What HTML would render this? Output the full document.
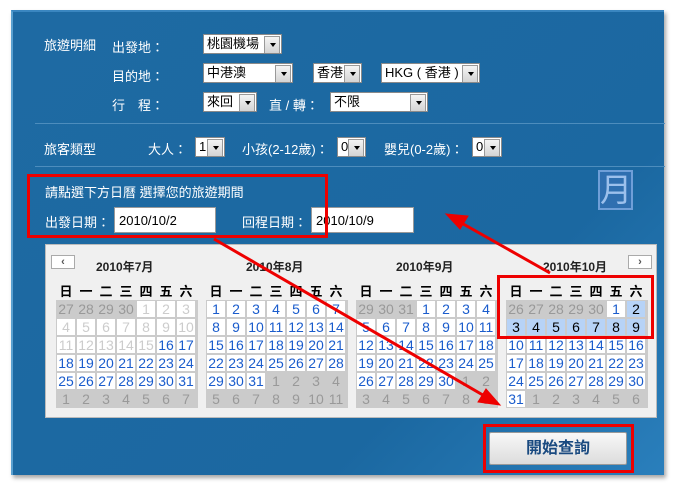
<!DOCTYPE html>
<html><head><meta charset="utf-8"><style>
*{margin:0;padding:0;box-sizing:border-box}
body{width:674px;height:484px;background:#fff;position:relative;overflow:hidden;font-family:"Liberation Sans","Noto Sans CJK TC",sans-serif;font-size:13px;color:#fff}
.a{position:absolute}
#panel{left:11px;top:10px;width:653px;height:465px;background:linear-gradient(135deg,#1e6aa3 0%,#1b68a1 70%,#2a7fbc 100%);border-top:2px solid #3a86c0;border-left:2px solid #5aa0d0;box-shadow:2px 3px 4px rgba(0,0,0,.35)}
.sel{position:absolute;height:20px;background:#fff;border:1px solid #8a8a8a;color:#000;font-size:13px;line-height:18px;padding-left:3px;white-space:nowrap;overflow:hidden}
.sel:after{content:"";position:absolute;right:1px;top:1px;width:14px;height:16px;background:linear-gradient(#f4f4f4,#d4d4d4);border:1px solid #999}
.sel:before{content:"";position:absolute;right:5px;top:8px;border:3px solid transparent;border-top:4px solid #000;z-index:2}
.hr{position:absolute;left:35px;width:630px;height:1px;background:#4d8dbd}
.inp{position:absolute;height:26px;background:#fff;border:1px solid #999;color:#000;font-size:13px;line-height:26px;padding-left:4px}
.red{position:absolute;border:3px solid #e00;}
#cal{left:45px;top:244px;width:612px;height:174px;background:#f0f0f0;border:1px solid #bbb}
.mt{position:absolute;top:13px;font-weight:bold;font-size:12px;color:#222}
.wd{position:absolute;top:36px;display:grid;grid-template-columns:repeat(7,20px);font-weight:bold;font-size:13px;color:#000;text-align:center}
.g{position:absolute;top:55px;display:grid;grid-template-columns:repeat(7,18px);grid-auto-rows:16px;gap:2px;background:#cbcbcb;padding:1px;width:142px}
.g span{font-size:14px;text-align:center;line-height:16px;color:#1a5ccc;background:#fff}
.g .d{color:#ccc}
.g .x{background:#cbcbcb;color:#999}
.g .s{background:#b7d3f7;color:#000}
.nb{position:absolute;top:10px;width:24px;height:14px;background:#fff;border:1px solid #aaa;color:#555;font-size:11px;line-height:12px;text-align:center;font-weight:bold}
</style></head><body>
<div id="panel" class="a"></div>
<div class="a" style="left:44px;top:35px">旅遊明細</div>
<div class="a" style="left:112px;top:37px">出發地：</div>
<div class="sel" style="left:203px;top:34px;width:79px">桃園機場</div>
<div class="a" style="left:112px;top:66px">目的地：</div>
<div class="sel" style="left:203px;top:63px;width:90px">中港澳</div>
<div class="sel" style="left:313px;top:63px;width:49px">香港</div>
<div class="sel" style="left:381px;top:63px;width:99px">HKG ( 香港 )</div>
<div class="a" style="left:112px;top:95px">行　程：</div>
<div class="sel" style="left:203px;top:92px;width:54px">來回</div>
<div class="a" style="left:269px;top:95px">直 / 轉：</div>
<div class="sel" style="left:330px;top:92px;width:98px">不限</div>
<div class="hr" style="top:123px"></div>
<div class="a" style="left:44px;top:139px">旅客類型</div>
<div class="a" style="left:148px;top:139px">大人：</div>
<div class="sel" style="left:195px;top:137px;width:30px">1</div>
<div class="a" style="left:242px;top:139px">小孩(2-12歲)：</div>
<div class="sel" style="left:337px;top:137px;width:29px">0</div>
<div class="a" style="left:384px;top:139px">嬰兒(0-2歲)：</div>
<div class="sel" style="left:472px;top:137px;width:30px">0</div>
<div class="hr" style="top:166px"></div>
<div class="a" style="left:45px;top:182px">請點選下方日曆 選擇您的旅遊期間</div>
<div class="a" style="left:45px;top:212px">出發日期：</div>
<div class="inp" style="left:114px;top:207px;width:102px">2010/10/2</div>
<div class="a" style="left:242px;top:212px">回程日期：</div>
<div class="inp" style="left:311px;top:207px;width:103px">2010/10/9</div>
<div class="a" style="left:598px;top:170px;width:35px;height:40px;border:2px solid #6f9fd8;background:#2f6fb0;color:#9cc0ec;font-size:32px;line-height:36px;text-align:center">月</div>
<div class="red" style="left:27px;top:174px;width:301px;height:64px"></div>

<div id="cal" class="a">
<div class="nb" style="left:5px">&lsaquo;</div>
<div class="nb" style="left:582px">&rsaquo;</div>
<div class="mt" style="left:50px">2010年7月</div>
<div class="mt" style="left:200px">2010年8月</div>
<div class="mt" style="left:350px">2010年9月</div>
<div class="mt" style="left:497px">2010年10月</div>
<div class="wd" style="left:10px"><span>日</span><span>一</span><span>二</span><span>三</span><span>四</span><span>五</span><span>六</span></div>
<div class="wd" style="left:160px"><span>日</span><span>一</span><span>二</span><span>三</span><span>四</span><span>五</span><span>六</span></div>
<div class="wd" style="left:310px"><span>日</span><span>一</span><span>二</span><span>三</span><span>四</span><span>五</span><span>六</span></div>
<div class="wd" style="left:460px"><span>日</span><span>一</span><span>二</span><span>三</span><span>四</span><span>五</span><span>六</span></div>
<div class="g" style="left:10px"><span class="x">27</span><span class="x">28</span><span class="x">29</span><span class="x">30</span><span class="d">1</span><span class="d">2</span><span class="d">3</span><span class="d">4</span><span class="d">5</span><span class="d">6</span><span class="d">7</span><span class="d">8</span><span class="d">9</span><span class="d">10</span><span class="d">11</span><span class="d">12</span><span class="d">13</span><span class="d">14</span><span class="d">15</span><span>16</span><span>17</span><span>18</span><span>19</span><span>20</span><span>21</span><span>22</span><span>23</span><span>24</span><span>25</span><span>26</span><span>27</span><span>28</span><span>29</span><span>30</span><span>31</span><span class="x">1</span><span class="x">2</span><span class="x">3</span><span class="x">4</span><span class="x">5</span><span class="x">6</span><span class="x">7</span></div>
<div class="g" style="left:160px"><span>1</span><span>2</span><span>3</span><span>4</span><span>5</span><span>6</span><span>7</span><span>8</span><span>9</span><span>10</span><span>11</span><span>12</span><span>13</span><span>14</span><span>15</span><span>16</span><span>17</span><span>18</span><span>19</span><span>20</span><span>21</span><span>22</span><span>23</span><span>24</span><span>25</span><span>26</span><span>27</span><span>28</span><span>29</span><span>30</span><span>31</span><span class="x">1</span><span class="x">2</span><span class="x">3</span><span class="x">4</span><span class="x">5</span><span class="x">6</span><span class="x">7</span><span class="x">8</span><span class="x">9</span><span class="x">10</span><span class="x">11</span></div>
<div class="g" style="left:310px"><span class="x">29</span><span class="x">30</span><span class="x">31</span><span>1</span><span>2</span><span>3</span><span>4</span><span>5</span><span>6</span><span>7</span><span>8</span><span>9</span><span>10</span><span>11</span><span>12</span><span>13</span><span>14</span><span>15</span><span>16</span><span>17</span><span>18</span><span>19</span><span>20</span><span>21</span><span>22</span><span>23</span><span>24</span><span>25</span><span>26</span><span>27</span><span>28</span><span>29</span><span>30</span><span class="x">1</span><span class="x">2</span><span class="x">3</span><span class="x">4</span><span class="x">5</span><span class="x">6</span><span class="x">7</span><span class="x">8</span><span class="x">9</span></div>
<div class="g" style="left:460px"><span class="x">26</span><span class="x">27</span><span class="x">28</span><span class="x">29</span><span class="x">30</span><span>1</span><span class="s">2</span><span class="s">3</span><span class="s">4</span><span class="s">5</span><span class="s">6</span><span class="s">7</span><span class="s">8</span><span class="s">9</span><span>10</span><span>11</span><span>12</span><span>13</span><span>14</span><span>15</span><span>16</span><span>17</span><span>18</span><span>19</span><span>20</span><span>21</span><span>22</span><span>23</span><span>24</span><span>25</span><span>26</span><span>27</span><span>28</span><span>29</span><span>30</span><span>31</span><span class="x">1</span><span class="x">2</span><span class="x">3</span><span class="x">4</span><span class="x">5</span><span class="x">6</span></div>
</div>
<div class="red" style="left:497px;top:275px;width:157px;height:64px"></div>
<div class="a" style="left:489px;top:432px;width:138px;height:33px;background:linear-gradient(#f8f8f8,#dcdcdc);border:1px solid #999;border-radius:2px;color:#1a4a80;font-weight:bold;font-size:16px;line-height:31px;text-align:center">開始查詢</div>
<div class="red" style="left:483px;top:424px;width:151px;height:49px"></div>
<svg class="a" style="left:0;top:0" width="674" height="484">
<g stroke="#e00" stroke-width="3" fill="#e00">
<line x1="550" y1="273" x2="458" y2="221"/>
<polygon points="446,214 468,216 460,229" stroke-width="1"/>
<line x1="214" y1="239" x2="488" y2="398"/>
<polygon points="500,405 478,402 486,389" stroke-width="1"/>
</g></svg>
</body></html>
